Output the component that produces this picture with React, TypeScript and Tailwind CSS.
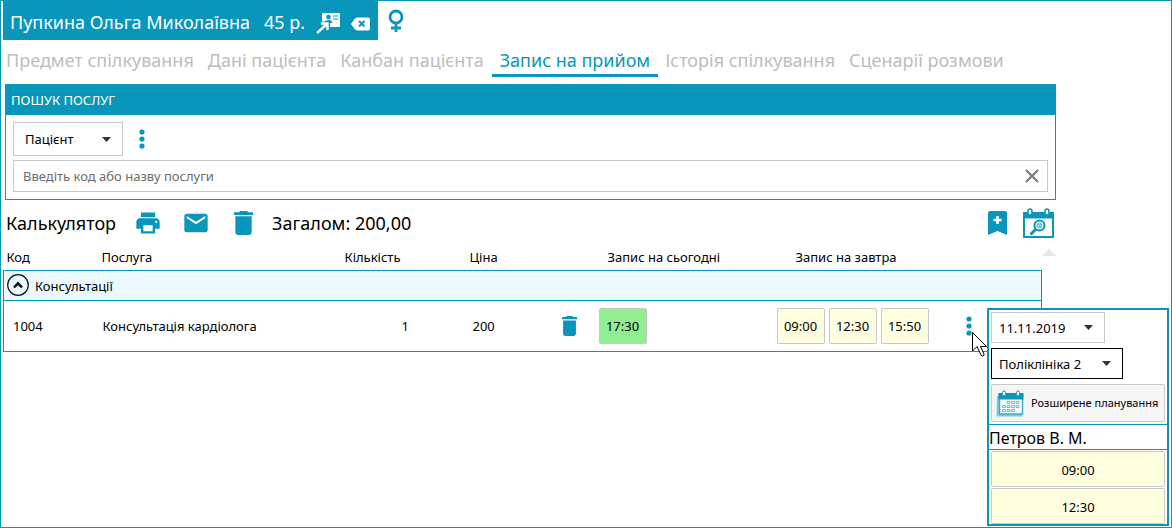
import type { ReactNode } from 'react';

type IconProps = { className?: string };

const PrintIcon = ({ className }: IconProps) => (
  <svg viewBox="0 0 24 24" fill="currentColor" className={className} aria-hidden="true">
    <path d="M19 8H5c-1.66 0-3 1.34-3 3v6h4v4h12v-4h4v-6c0-1.66-1.34-3-3-3zm-3 11H8v-5h8v5zm3-7c-.55 0-1-.45-1-1s.45-1 1-1 1 .45 1 1-.45 1-1 1zm-1-9H6v4h12V3z" />
  </svg>
);

const MailIcon = ({ className }: IconProps) => (
  <svg viewBox="0 0 24 24" fill="currentColor" className={className} aria-hidden="true">
    <path d="M20 4H4c-1.1 0-1.99.9-1.99 2L2 18c0 1.1.9 2 2 2h16c1.1 0 2-.9 2-2V6c0-1.1-.9-2-2-2zm0 4l-8 5-8-5V6l8 5 8-5v2z" />
  </svg>
);

const TrashIcon = ({ className }: IconProps) => (
  <svg viewBox="5 3 14 18" preserveAspectRatio="none" fill="currentColor" className={className} aria-hidden="true">
    <path d="M6 19c0 1.1.9 2 2 2h8c1.1 0 2-.9 2-2V7H6v12zM19 4h-3.5l-1-1h-5l-1 1H5v2h14V4z" />
  </svg>
);

const DotsIcon = ({ className }: IconProps) => (
  <svg viewBox="0 0 6 20" fill="currentColor" className={className} aria-hidden="true">
    <circle cx="3" cy="3" r="2.6" />
    <circle cx="3" cy="10" r="2.6" />
    <circle cx="3" cy="17" r="2.6" />
  </svg>
);

const CardIcon = ({ className }: IconProps) => (
  <svg viewBox="0 0 24 22" className={className} aria-hidden="true">
    <rect x="6" y="1" width="18" height="14" rx="1" fill="#fff" />
    <circle cx="12.5" cy="5" r="2.3" fill="#0896bb" />
    <path d="M8.500 11c0-4 8-4 8 0z" fill="#0896bb" />
    <path d="M17 4h5M17 7h5" stroke="#0896bb" strokeWidth="1" />
    <path d="M1 20.500L8.500 13M3.500 11.500h8.500v7" fill="none" stroke="#0896bb" strokeWidth="4" />
    <path d="M5 11.500h6.500v6.500M11.500 11.500L1 21" fill="none" stroke="#fff" strokeWidth="2.400" />
  </svg>
);

const ClearIcon = ({ className }: IconProps) => (
  <svg viewBox="0 0 20 14" className={className} aria-hidden="true">
    <path d="M6 0.500h11Q19 .5 19 2.500v9Q19 13.500 17 13.500H6L4 12.500 0 7 4 1.500z" fill="#fff" />
    <path d="M8 4l5.500 5.500M13.500 4L8 9.500" stroke="#0896bb" strokeWidth="2" />
  </svg>
);

const FemaleIcon = ({ className }: IconProps) => (
  <svg viewBox="0 0 16 24" fill="none" stroke="currentColor" strokeWidth="2.800" className={className} aria-hidden="true">
    <circle cx="8" cy="8" r="6" />
    <path d="M8 14v9M3 19h10" />
  </svg>
);

const BookmarkIcon = ({ className }: IconProps) => (
  <svg viewBox="0 0 19 24" className={className} aria-hidden="true">
    <path d="M2 0h15q2 0 2 2v22l-9.500-4L0 24V2Q0 0 2 0z" fill="currentColor" />
    <path d="M9.500 5v8M5.500 9h8" stroke="#fff" strokeWidth="2.500" />
  </svg>
);

const CalendarSearchIcon = ({ className }: IconProps) => (
  <svg viewBox="0 0 31 31" fill="none" className={className} aria-hidden="true">
    <path d="M1 5h29v24H1z" stroke="currentColor" strokeWidth="2" />
    <path d="M0 4h31v6.500H0z" fill="currentColor" />
    <rect x="5" y="1" width="4" height="6" rx="2" fill="#fff" stroke="currentColor" strokeWidth="1.500" />
    <rect x="22" y="1" width="4" height="6" rx="2" fill="#fff" stroke="currentColor" strokeWidth="1.500" />
    <circle cx="16.500" cy="17.500" r="5" stroke="currentColor" strokeWidth="2" />
    <circle cx="16.500" cy="17.500" r="2.600" stroke="currentColor" strokeWidth=".8" />
    <path d="M15 16.800h3M15 18.300h3" stroke="currentColor" strokeWidth=".8" />
    <path d="M13 21L7.500 26.500" stroke="currentColor" strokeWidth="3" />
  </svg>
);

const CalendarIcon = ({ className }: IconProps) => (
  <svg viewBox="0 0 28 27" fill="none" className={className} aria-hidden="true">
    <path d="M1 6h3v18h22v2.500H.5z" fill="#7fcadd" />
    <path d="M3.500 4h23v20h-23z" fill="#fff" stroke="#3dabc9" strokeWidth="1.500" />
    <path d="M2.500 3h25v6.500h-25z" fill="#0896bb" />
    <rect x="6.500" y="1" width="3" height="5" rx="1.500" fill="#fff" stroke="#0896bb" />
    <rect x="20.500" y="1" width="3" height="5" rx="1.500" fill="#fff" stroke="#0896bb" />
    <g stroke="#59b7cf" strokeWidth=".9">
      <path d="M11 11.500h3v2h-3zM15.500 11.500h3v2h-3zM20 11.500h3v2h-3z" />
      <path d="M6.500 15.500h3v2h-3zM11 15.500h3v2h-3zM15.500 15.500h3v2h-3zM20 15.500h3v2h-3z" />
      <path d="M6.500 19.500h3v2h-3zM11 19.500h3v2h-3zM15.500 19.500h3v2h-3z" />
    </g>
  </svg>
);

const Caret = ({ className }: IconProps) => (
  <svg viewBox="0 0 9 5" fill="#333" className={className} aria-hidden="true">
    <path d="M0 0h9L4.500 5z" />
  </svg>
);

function Dropdown({ label, options, box, caret }: { label: string; options: string[]; box: string; caret: string }) {
  return (
    <div className={`grid items-center border bg-white ${box}`}>
      <select aria-label={label} className="col-start-1 row-start-1 h-full w-full appearance-none bg-transparent pt-[2px] text-[13px] outline-none">
        {options.map((o) => (
          <option key={o}>{o}</option>
        ))}
      </select>
      <Caret className={`pointer-events-none col-start-1 row-start-1 h-[5px] w-[9px] justify-self-end ${caret}`} />
    </div>
  );
}

function Slot({ children, className }: { children: ReactNode; className: string }) {
  return (
    <button type="button" className={`rounded-xs border border-[#c8c8c8] pt-[3px] text-[13px] ${className}`}>
      {children}
    </button>
  );
}

const tabs = ['Предмет спілкування', 'Дані пацієнта', 'Канбан пацієнта', 'Запис на прийом', 'Історія спілкування', 'Сценарії розмови'];
const activeTab = 3;

export default function App() {
  return (
    <main className="min-h-screen border border-[#0896bb] bg-white pl-[2px] font-['Noto_Sans','Open_Sans',sans-serif] text-[13px] text-black">
      <header className="flex h-[39px]">
        <div className="flex items-center bg-[#0896bb] px-[7px] text-white">
          <h1 className="flex gap-[14px] pt-[4px] text-[18px]">
            <span>Пупкина Ольга Миколаївна</span>
            <span>45 р.</span>
          </h1>
          <button type="button" aria-label="Картка пацієнта" className="ml-[11px] pt-[4px]">
            <CardIcon className="h-[22px] w-[24px]" />
          </button>
          <button type="button" aria-label="Закрити" className="ml-[11px] pt-[6px]">
            <ClearIcon className="h-[14px] w-[20px]" />
          </button>
        </div>
        <FemaleIcon className="mt-[8px] ml-[10px] h-[24px] w-[16px] text-[#0896bb]" />
      </header>

      <nav className="flex h-[37px] pt-[4px] text-[18px] leading-[33px] text-[#bdbdbd]">
        {tabs.map((t, i) => (
          <a
            key={t}
            href="#"
            aria-current={i === activeTab ? 'page' : undefined}
            className={
              i === activeTab
                ? 'ml-[-3px] border-b-3 border-[#0896bb] px-[8px] text-[#0896bb]'
                : i > activeTab
                  ? 'px-[7px]'
                  : 'pr-[11px] pl-[3px]'
            }
          >
            {t}
          </a>
        ))}
      </nav>

      <div className="mr-[115px]">
        <section className="mt-[7px] ml-[2px] border border-[#0896bb]">
          <h2 className="h-[30px] bg-[#0896bb] px-[5px] leading-[30px] text-white">ПОШУК ПОСЛУГ</h2>
          <div className="p-[7px]">
            <div className="flex items-center gap-[16px]">
              <Dropdown label="Тип пошуку" options={['Пацієнт']} box="h-[34px] w-[110px] border-[#c8c8c8] [&>select]:pl-[11px]" caret="mr-[11px]" />
              <button type="button" aria-label="Додаткові дії" className="text-[#0896bb]">
                <DotsIcon className="h-[20px] w-[6px]" />
              </button>
            </div>
            <div className="mt-[4px] flex h-[32px] items-center border border-[#c8c8c8] pr-[8px] pl-[9px]">
              <input aria-label="Послуга" placeholder="Введіть код або назву послуги" className="min-w-0 flex-1 pt-px outline-none placeholder:text-[#6d6d6d]" />
              <button type="button" aria-label="Очистити">
                <svg viewBox="0 0 14 14" className="size-[14px]" stroke="#7c7c7c" strokeWidth="2.300">
                  <path d="M1 1l12 12M13 1L1 13" />
                </svg>
              </button>
            </div>
          </div>
        </section>

        <div className="flex h-[46px] items-center pl-[3px] text-[18px]">
          <h2>Калькулятор</h2>
          <div className="ml-[18px] flex items-center gap-[20px] text-[#0896bb]">
            <button type="button" aria-label="Друк">
              <PrintIcon className="size-[28px]" />
            </button>
            <button type="button" aria-label="Надіслати">
              <MailIcon className="size-[28px]" />
            </button>
            <button type="button" aria-label="Видалити все" className="ml-[4px]">
              <TrashIcon className="h-[24px] w-[19px]" />
            </button>
          </div>
          <p className="ml-[19px]">Загалом: 200,00</p>
          <div className="mr-[2px] ml-auto flex items-center gap-[16px] text-[#0896bb]">
            <button type="button" aria-label="Закладка">
              <BookmarkIcon className="h-[24px] w-[19px]" />
            </button>
            <button type="button" aria-label="Пошук у календарі">
              <CalendarSearchIcon className="size-[31px]" />
            </button>
          </div>
        </div>

        <div className="flex items-start">
          <table className="min-w-0 flex-1 table-fixed border-collapse">
            <colgroup>
              <col className="w-[96px]" />
              <col className="w-[244px]" />
              <col className="w-[102px]" />
              <col className="w-[98px]" />
              <col className="w-[55px]" />
              <col className="w-[178px]" />
              <col />
              <col className="w-[85px]" />
            </colgroup>
            <thead>
              <tr className="h-[24px] text-left [&>th]:font-normal">
                <th className="pl-[3px]">Код</th>
                <th className="pl-[2px]">Послуга</th>
                <th className="pl-px">Кількість</th>
                <th className="pl-[24px]">Ціна</th>
                <th aria-label="Дії" />
                <th className="pl-[9px]">Запис на сьогодні</th>
                <th className="pl-[19px]">Запис на завтра</th>
                <th aria-label="Меню" />
              </tr>
            </thead>
            <tbody className="border border-[#0896bb]">
              <tr className="h-[30px] border-b border-[#0896bb] bg-[#ebf9fe]">
                <td colSpan={8} className="pl-[3px]">
                  <button type="button" className="flex items-center gap-[6px]">
                    <svg viewBox="0 0 22 22" fill="none" stroke="#111" className="size-[22px]">
                      <circle cx="11" cy="11" r="10.300" strokeWidth="1.200" />
                      <path d="M7 13.300L11 9.300l4 4" strokeWidth="2.500" />
                    </svg>
                    <span className="pt-[3px]">Консультації</span>
                  </button>
                </td>
              </tr>
              <tr className="h-[51px]">
                <td className="pt-[3px] pl-[9px]">1004</td>
                <td className="pt-[3px] pl-[3px]">Консультація кардіолога</td>
                <td className="pt-[3px] pl-[58px]">1</td>
                <td className="pt-[3px] pl-[27px]">200</td>
                <td className="pl-[18px]">
                  <button type="button" aria-label="Видалити послугу" className="block text-[#0896bb]">
                    <TrashIcon className="h-[20px] w-[15px]" />
                  </button>
                </td>
                <td>
                  <Slot className="h-[36px] w-[48px] bg-[#90ee90]">17:30</Slot>
                </td>
                <td>
                  <div className="flex gap-[4px]">
                    {['09:00', '12:30', '15:50'].map((t) => (
                      <Slot key={t} className="h-[36px] w-[48px] bg-[#ffffe0]">
                        {t}
                      </Slot>
                    ))}
                  </div>
                </td>
                <td className="pl-[9px]">
                  <button type="button" aria-label="Інші записи" className="block text-[#0896bb]">
                    <DotsIcon className="h-[20px] w-[6px]" />
                  </button>
                </td>
              </tr>
            </tbody>
          </table>
          <button type="button" aria-label="Прокрутити вгору" className="pt-[3px]">
            <svg viewBox="0 0 14 7" fill="#e6e6e6" className="h-[7px] w-[14px]">
              <path d="M7 0l7 7H0z" />
            </svg>
          </button>
        </div>
      </div>

      <aside className="absolute top-[308px] right-[3px] w-[182px] border-2 border-[#0896bb] bg-white">
        <div className="px-[2px] pt-[2px]">
          <Dropdown label="Дата" options={['11.11.2019']} box="h-[31px] w-[114px] border-[#c8c8c8] [&>select]:pl-[7px]" caret="mr-[11px]" />
          <Dropdown label="Філія" options={['Поліклініка 2']} box="mt-[5px] h-[31px] w-[132px] border-black [&>select]:pl-[7px]" caret="mr-[11px]" />
          <button type="button" className="mt-[5px] flex h-[38px] w-full items-center gap-[7px] rounded-xs border border-[#c8c8c8] bg-[#f5f5f5] pl-[4px] text-[11px] whitespace-nowrap">
            <CalendarIcon className="h-[27px] w-[28px] shrink-0" />
            Розширене планування
          </button>
        </div>
        <h3 className="mt-[2px] h-[26px] border-y border-[#0896bb] text-[16px] leading-[26px]">Петров В. М.</h3>
        <div className="flex flex-col gap-px px-[2px] pt-px">
          <Slot className="h-[36px] bg-[#ffffe0]">09:00</Slot>
          <Slot className="h-[36px] bg-[#ffffe0]">12:30</Slot>
        </div>
      </aside>

      <svg viewBox="0 0 16 26" className="pointer-events-none absolute top-[332px] right-[184px] h-[26px] w-[16px]" aria-hidden="true">
        <path d="M.5 .5V19l4.500-4.500 4 8.500q.5 1.500 2 1t1-2L8.500 14.500H14.500z" fill="#fff" stroke="#000" />
      </svg>
    </main>
  );
}
